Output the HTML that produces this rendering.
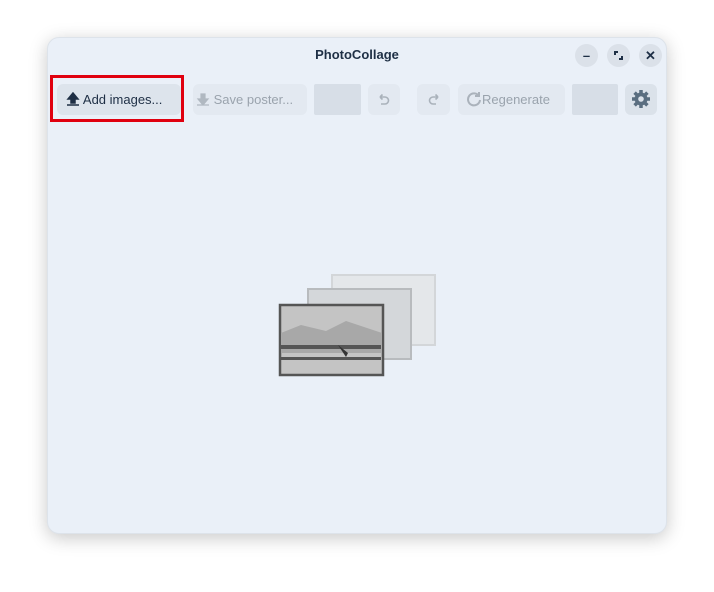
<!DOCTYPE html>
<html><head><style>
body{margin:0;width:714px;height:592px;background:#fff;font-family:"Liberation Sans",sans-serif;position:relative;overflow:hidden}
.win{position:absolute;left:47px;top:37px;width:620px;height:497px;background:#eaf0f8;border-radius:12px;box-shadow:0 4px 18px rgba(0,0,0,.22);border:1px solid #dde3ea;box-sizing:border-box}
.a{position:absolute}
.title{left:0;right:0;top:9px;text-align:center;font-weight:bold;font-size:13px;color:#1e2f45}
.c{width:23px;height:23px;border-radius:50%;background:#dbe1e9;top:6px;color:#1e2f45;font-weight:bold;font-size:13px;text-align:center;line-height:23px}
.b{top:46px;height:31px;border-radius:6px;background:#e3e9f1;font-size:13px;color:#9aa3ad;line-height:31px;box-sizing:border-box}
.d{background:#d7dee7;border-radius:2px}
.m{vertical-align:middle}
</style></head><body>
<div class="win">
<div class="a title">PhotoCollage</div>
<div class="a c" style="left:527px">–</div>
<div class="a c" style="left:559px"><svg width="23" height="23" style="display:block"><path d="M8 11V8h3M15 12v3h-3" stroke="#1e2f45" stroke-width="2" fill="none"/></svg></div>
<div class="a c" style="left:591px">✕</div>
<div class="a b" style="left:9px;width:124px;background:#dde4ec;color:#1e2f45;padding-left:9px"><svg width="14" height="14" style="vertical-align:-2px"><path d="M7 1L2 7h3v4h4V7h3z M1 13h12" stroke="#1e2f45" fill="#1e2f45" stroke-width="1.5"/></svg> Add images...</div>
<div class="a b" style="left:145px;width:114px;padding-left:3px"><svg width="14" height="14" style="vertical-align:-2px"><path d="M7 13L2 7h3V2h4v5h3z M1 13h12" stroke="#b0b8c1" fill="#b0b8c1" stroke-width="1.2"/></svg> Save poster...</div>
<div class="a b d" style="left:266px;width:47px"></div>
<div class="a b" style="left:320px;width:32px;text-align:center"><svg class="m" width="16" height="16"><path d="M4 4h5a3.5 3.5 0 0 1 0 7H5M4 4l2.5-2.5M4 4l2.5 2.5" stroke="#aab2bb" stroke-width="1.6" fill="none"/></svg></div>
<div class="a b" style="left:369px;width:33px;text-align:center"><svg class="m" width="16" height="16"><path d="M12 4H7a3.5 3.5 0 0 0 0 7h3M12 4L9.5 1.5M12 4L9.5 6.5" stroke="#aab2bb" stroke-width="1.6" fill="none"/></svg></div>
<div class="a b" style="left:410px;width:107px;padding-left:8px"><svg width="16" height="16" style="vertical-align:-3px"><path d="M13 5A6 6 0 1 0 14 9M13 1v4h-4" stroke="#aab2bb" stroke-width="2" fill="none"/></svg>Regenerate</div>
<div class="a b d" style="left:524px;width:46px"></div>
<div class="a b" style="left:577px;width:32px;background:#dbe2ea;text-align:center"><svg width="20" height="20" style="vertical-align:-5px"><g fill="#5a6e80"><circle cx="10" cy="10" r="6.5"/><g stroke="#5a6e80" stroke-width="3.5"><path d="M10 1v18M1 10h18M3.6 3.6l12.8 12.8M16.4 3.6L3.6 16.4"/></g></g><circle cx="10" cy="10" r="2.8" fill="#dbe2ea"/></svg></div>
<svg class="a" style="left:230px;top:235px" width="160" height="105">
<rect x="54" y="2" width="103" height="70" fill="#e4e7ea" stroke="#d3d6d9" stroke-width="2"/>
<rect x="30" y="16" width="103" height="70" fill="#d4d7da" stroke="#b8bbbe" stroke-width="2"/>
<rect x="2" y="32" width="103" height="70" fill="#c4c4c4" stroke="#555" stroke-width="2.5"/>
<path d="M3 60l20-8 25 6 20-10 36 12v20H3z" fill="#a8a8a8"/>
<path d="M3 72h100v4H3zM3 84h100v3H3z" fill="#555"/>
<path d="M60 72l8 12 2-4z" fill="#333"/>
</svg>
</div>
<div class="a" style="left:50px;top:75px;width:134px;height:47px;border:3px solid #e0000f;box-sizing:border-box"></div>
</body></html>
